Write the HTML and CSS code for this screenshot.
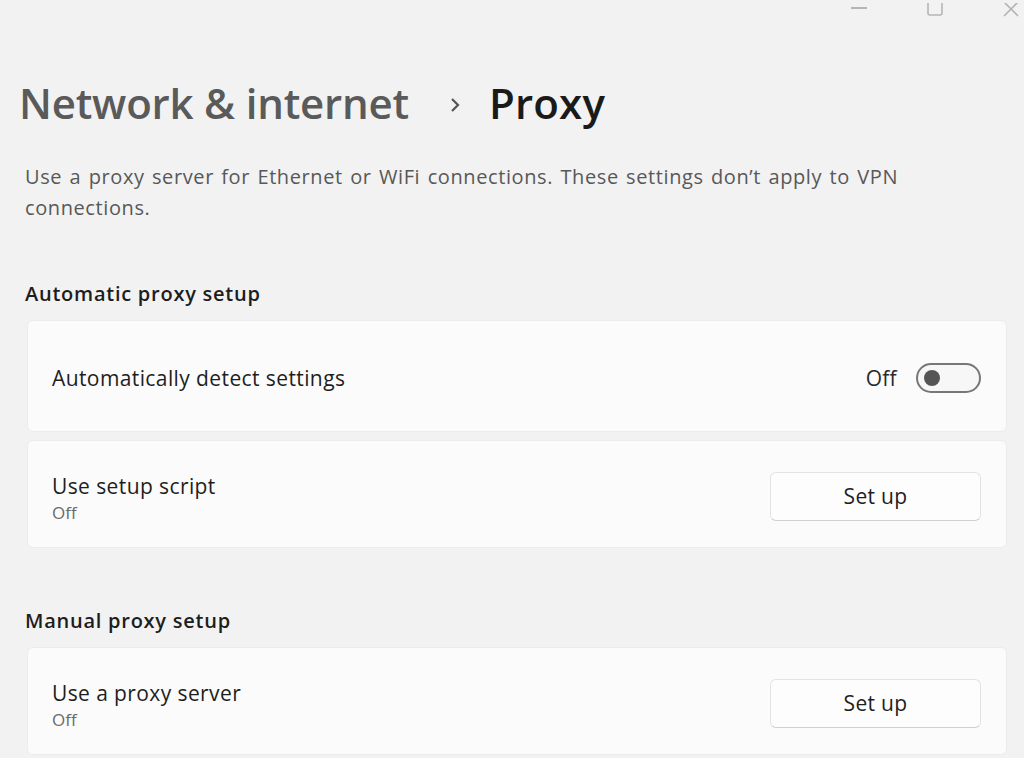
FILE: index.html
```html
<!DOCTYPE html>
<html lang="en">
<head>
<meta charset="utf-8">
<title>Proxy</title>
<link rel="stylesheet" href="styles.css">
</head>
<body>
<div class="window">
  <div class="titlebar">
    <span class="ctl ctl-min"><svg width="20" height="14" viewBox="0 0 20 14"><line x1="2" y1="5" x2="18" y2="5" stroke="#b5b5b5" stroke-width="2"/></svg></span>
    <span class="ctl ctl-max"><svg width="20" height="14" viewBox="0 0 20 14"><rect x="3" y="-3" width="14" height="15" rx="2" fill="none" stroke="#b5b5b5" stroke-width="1.6"/></svg></span>
    <span class="ctl ctl-close"><svg width="20" height="14" viewBox="0 0 20 14"><path d="M3 -1 L17 13 M17 -1 L3 13" stroke="#b5b5b5" stroke-width="1.6"/></svg></span>
  </div>
  <h1 class="crumbs"><span class="crumb-parent">Network &amp; internet</span><span class="crumb-sep"><svg width="12" height="16" viewBox="0 0 12 16"><path d="M3 2 L9 8 L3 14" fill="none" stroke="#555" stroke-width="2.2"/></svg></span><span class="crumb-current">Proxy</span></h1>
  <p class="intro">Use a proxy server for Ethernet or WiFi connections. These settings don’t apply to VPN connections.</p>

  <h2 class="section-title">Automatic proxy setup</h2>
  <div class="card card-tall">
    <div class="row-text"><div class="row-label">Automatically detect settings</div></div>
    <div class="row-action">
      <span class="toggle-label">Off</span>
      <span class="toggle"><span class="knob"></span></span>
    </div>
  </div>
  <div class="card">
    <div class="row-text"><div class="row-label">Use setup script</div><div class="row-sub">Off</div></div>
    <div class="row-action"><button class="btn">Set up</button></div>
  </div>

  <h2 class="section-title section-manual">Manual proxy setup</h2>
  <div class="card">
    <div class="row-text"><div class="row-label">Use a proxy server</div><div class="row-sub">Off</div></div>
    <div class="row-action"><button class="btn">Set up</button></div>
  </div>
</div>
</body>
</html>
```
FILE: styles.css
```css
html, body {
  margin: 0;
  padding: 0;
  background: #f2f2f2;
  overflow: hidden;
}
body {
  font-family: "Open Sans", "Noto Sans", sans-serif;
  color: #1b1b1b;
  width: 1024px;
  height: 758px;
}
.window {
  padding: 0 17px 0 27px;
}
.titlebar {
  display: flex;
  justify-content: flex-end;
  align-items: flex-start;
  gap: 56px;
  height: 60px;
  margin-right: -14px;
}
.ctl { display: block; height: 14px; }
.crumbs {
  margin: 0 0 0 -8px;
  font-weight: 600;
  font-size: 42px;
  line-height: 86px;
  height: 86px;
  display: flex;
  align-items: center;
  letter-spacing: -0.2px;
}
.crumb-parent { color: #5a5a5a; }
.crumb-sep { display: flex; align-items: center; margin: 4px 28px 0 40px; }
.crumb-current { color: #1a1a1a; letter-spacing: 0.2px; }
.intro {
  margin: 15px 0 0 -2px;
  font-size: 20px;
  letter-spacing: 0.6px;
  word-spacing: 1.6px;
  line-height: 31px;
  color: #585858;
  max-width: 910px;
}
.section-title {
  margin: 56px 0 0 -2px;
  font-size: 20px;
  letter-spacing: 0.75px;
  font-weight: 600;
  line-height: 30px;
  color: #1d1d1d;
}
.section-manual { margin-top: 58px; }
.card {
  display: flex;
  align-items: center;
  justify-content: space-between;
  background: #fbfbfb;
  border: 1px solid #ececec;
  border-radius: 6px;
  height: 108px;
  margin-top: 8px;
  padding: 7px 25px 0 24px;
  box-sizing: border-box;
}
.section-title + .card { margin-top: 11px; }
.card-tall { height: 112px; padding-top: 3px; }
.row-label {
  font-size: 21px;
  letter-spacing: 0.4px;
  line-height: 30px;
  color: #1e1e1e;
}
.row-sub {
  font-size: 17px;
  line-height: 24px;
  color: #6a6a6a;
}
.row-action {
  display: flex;
  align-items: center;
}
.toggle-label {
  font-size: 21px;
  letter-spacing: 0.3px;
  color: #2a2a2a;
  margin-right: 19px;
}
.toggle {
  width: 65px;
  height: 30px;
  border: 2px solid #777;
  border-radius: 16px;
  display: flex;
  align-items: center;
  padding-left: 6px;
  box-sizing: border-box;
  background: #f7f7f7;
}
.knob {
  width: 16px;
  height: 16px;
  border-radius: 50%;
  background: #555;
}
.btn {
  width: 211px;
  height: 49px;
  border: 1px solid #e3e3e3;
  border-bottom-color: #d0d0d0;
  border-radius: 6px;
  background: #fdfdfd;
  font-family: inherit;
  font-size: 21px;
  letter-spacing: 0.3px;
  color: #1e1e1e;
  padding: 0;
  margin-top: -3px;
}
```
